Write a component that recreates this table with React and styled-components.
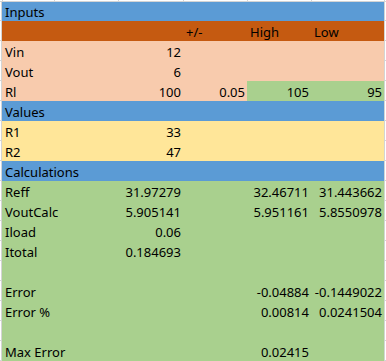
import React from "react"
import styled, { createGlobalStyle } from "styled-components"

const colors = {
  blue: "#5b9bd5",
  rust: "#c55a11",
  peach: "#f8cbad",
  gold: "#ffe699",
  green: "#a9d08e",
  grid: "#d4d4d4",
}

const COLUMNS = "2px 116px 65px 64px 64px 73px 2px"

const GlobalStyle = createGlobalStyle`
  html, body {
    margin: 0;
    padding: 0;
    background: #ffffff;
  }
  body {
    font-family: "Noto Sans", "Open Sans", sans-serif;
    font-size: 13px;
    color: #000000;
  }
`

const Sheet = styled.div`
  width: 386px;
  height: 361px;
  overflow: hidden;
  background: #ffffff;
`

const TopStrip = styled.div`
  display: grid;
  grid-template-columns: 2px 52px 64px 65px 64px 64px 73px 2px;
  height: 2px;
  box-sizing: border-box;
  border-bottom: 1px solid ${colors.grid};

  span + span {
    border-left: 1px solid ${colors.grid};
  }
`

const Row = styled.div`
  display: grid;
  grid-template-columns: ${COLUMNS};
  height: ${(p) => (p.$first ? 19 : 20)}px;
  background: ${(p) => p.$fill};
`

const Gutter = styled.div`
  background: #ffffff;
  box-sizing: border-box;
  border-bottom: 1px solid ${colors.grid};
  ${(p) => (p.$side === "left" ? `border-right: 1px solid ${colors.grid};` : `border-left: 1px solid ${colors.grid};`)}
`

const Cell = styled.div`
  display: flex;
  align-items: flex-end;
  justify-content: ${(p) => (p.$align === "right" ? "flex-end" : "flex-start")};
  padding: 0 ${(p) => (p.$align === "right" ? "2px" : "0")} 1px
    ${(p) => (p.$align === "right" ? "0" : "3px")};
  line-height: 16px;
  white-space: nowrap;
  overflow: visible;
  background: ${(p) => p.$fill || "transparent"};
`

const rows = [
  { fill: colors.blue, label: "Inputs" },
  { fill: colors.rust, headers: ["", "+/-", "High", "Low"] },
  { fill: colors.peach, label: "Vin", values: ["12"] },
  { fill: colors.peach, label: "Vout", values: ["6"] },
  {
    fill: colors.peach,
    label: "Rl",
    values: ["100", "0.05", "105", "95"],
    cellFills: [null, null, colors.green, colors.green],
  },
  { fill: colors.blue, label: "Values" },
  { fill: colors.gold, label: "R1", values: ["33"] },
  { fill: colors.gold, label: "R2", values: ["47"] },
  { fill: colors.blue, label: "Calculations" },
  { fill: colors.green, label: "Reff", values: ["31.97279", "", "32.46711", "31.443662"] },
  { fill: colors.green, label: "VoutCalc", values: ["5.905141", "", "5.951161", "5.8550978"] },
  { fill: colors.green, label: "Iload", values: ["0.06"] },
  { fill: colors.green, label: "Itotal", values: ["0.184693"] },
  { fill: colors.green },
  { fill: colors.green, label: "Error", values: ["", "", "-0.04884", "-0.1449022"] },
  { fill: colors.green, label: "Error %", values: ["", "", "0.00814", "0.0241504"] },
  { fill: colors.green },
  { fill: colors.green, label: "Max Error", values: ["", "", "0.02415", ""] },
]

function SheetRow({ row, first }) {
  const cells = [0, 1, 2, 3].map((i) => {
    const fill = row.cellFills ? row.cellFills[i] : null
    if (row.headers) {
      return (
        <Cell key={i} $align="left" $fill={fill}>
          {row.headers[i]}
        </Cell>
      )
    }
    return (
      <Cell key={i} $align="right" $fill={fill}>
        {row.values ? row.values[i] : ""}
      </Cell>
    )
  })

  return (
    <Row $fill={row.fill} $first={first}>
      <Gutter $side="left" />
      <Cell $align="left">{row.label}</Cell>
      {cells}
      <Gutter $side="right" />
    </Row>
  )
}

export default function App() {
  return (
    <>
      <GlobalStyle />
      <Sheet>
        <TopStrip>
          {Array.from({ length: 8 }).map((_, i) => (
            <span key={i} />
          ))}
        </TopStrip>
        {rows.map((row, i) => (
          <SheetRow key={i} row={row} first={i === 0} />
        ))}
      </Sheet>
    </>
  )
}
